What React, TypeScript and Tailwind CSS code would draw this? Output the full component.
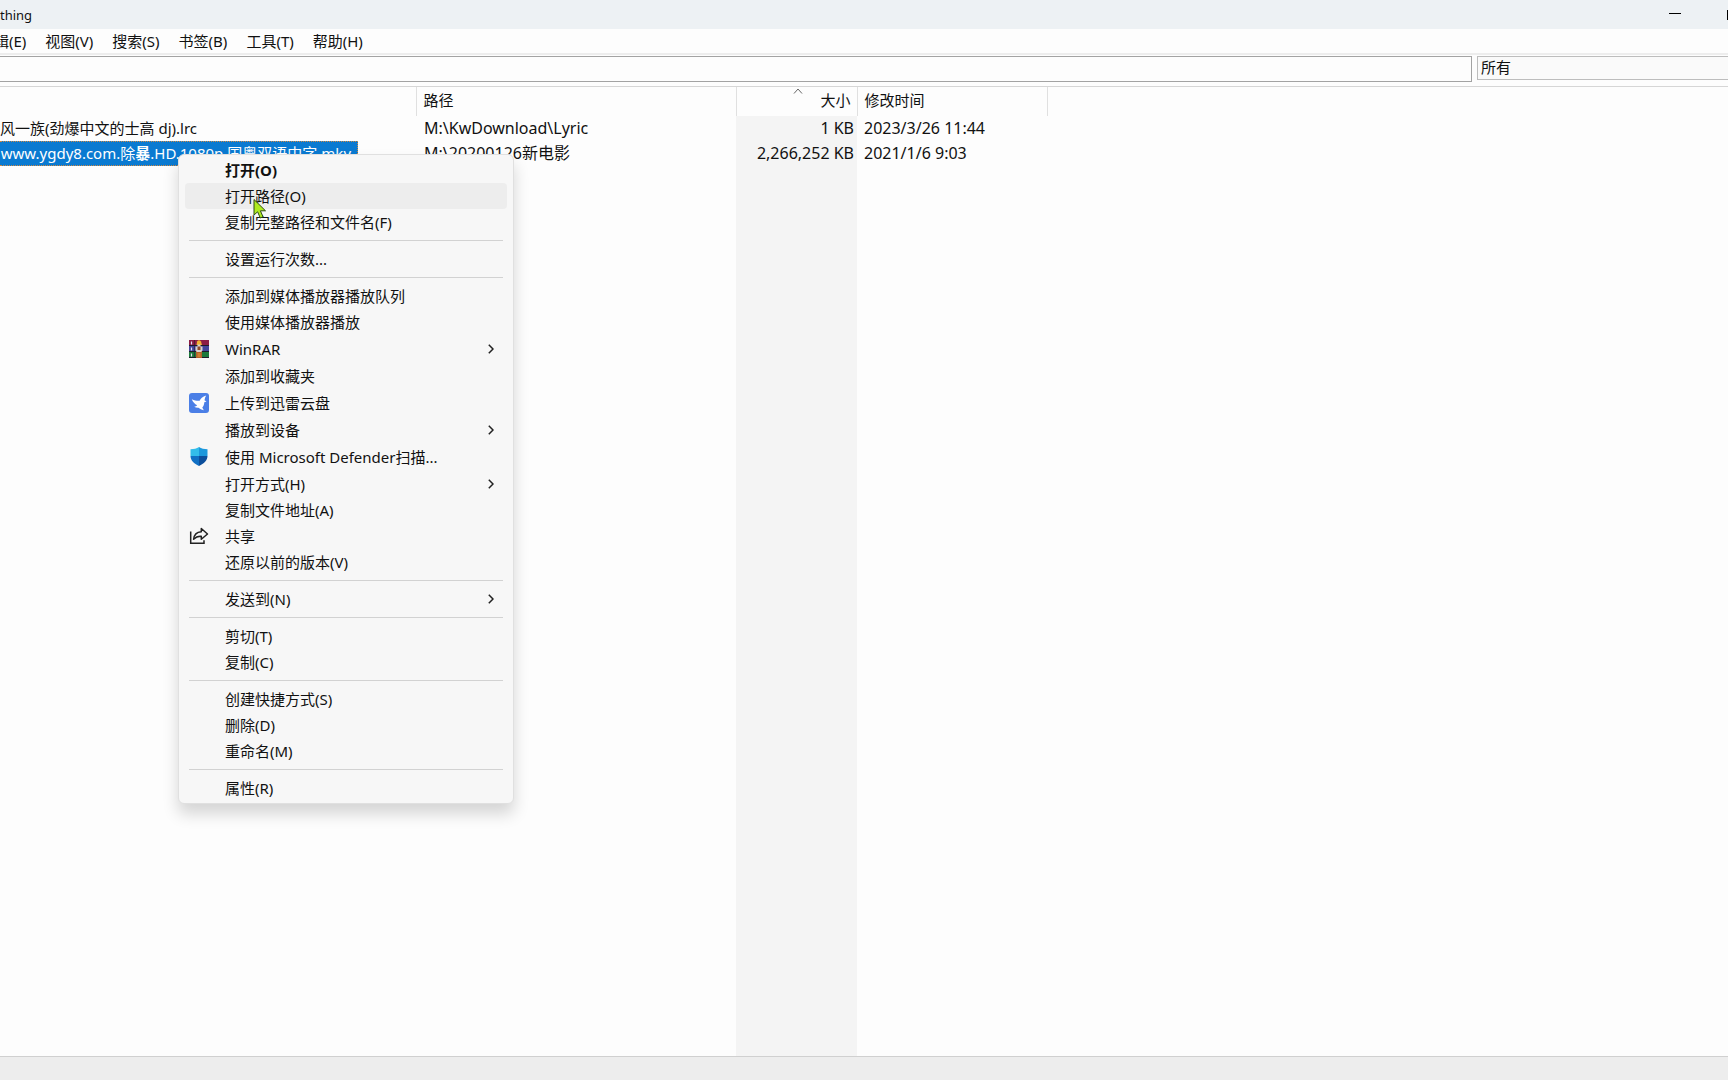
import React from "react";

type Item = {
  label: string;
  icon?: React.ReactNode;
  submenu?: boolean;
  bold?: boolean;
  active?: boolean;
  tall?: boolean;
};

function WinRarIcon() {
  return (
    <svg viewBox="0 0 20 18" className="h-[18px] w-5" aria-hidden="true">
      <rect x="0" y="0" width="20" height="6" fill="#8c1d45" />
      <rect x="0" y="6" width="20" height="6" fill="#43459c" />
      <rect x="0" y="12" width="20" height="6" fill="#1c7a3c" />
      <path d="M0 5.5h20M0 11.5h20M0 17.5h20" stroke="#1e1b2a" strokeWidth="1" />
      <path d="M2.500 1.500v3M2.500 7.500v3M2.500 13.500v3" stroke="#e8dff0" strokeWidth="1.200" />
      <path d="M5.500 0v5M5.500 6v5M5.500 12v5" stroke="#2b1830" strokeWidth="0.600" />
      <rect x="7" y="11" width="6" height="7" fill="#b4622c" />
      <path d="M8 1.500Q10 -1 12 1.500L13 5H7.500Z" fill="#f2b233" />
      <path d="M6.500 10.500V6.500H8.500V4.500H11.500V6.500H13.500V10.500L12 12H8Z" fill="#d9d3cf" />
      <path d="M8.500 6.500h3v3.500h-3z" fill="#8f4a2c" />
      <path d="M8.500 13h3v4h-3z" fill="#cf7f30" />
    </svg>
  );
}

function XunleiIcon() {
  return (
    <svg viewBox="0 0 20 20" className="size-5" aria-hidden="true">
      <rect width="20" height="20" rx="3" fill="#4b7fe6" />
      <path
        d="M2.800 6.200C5.500 7.500 8 8 10.600 7.800C11.500 5.800 13.500 3.800 17.200 2.600C16.200 4.200 15.700 5.600 15.500 7.200L17.500 8.600L15.300 9.200C15.200 11.500 14.500 13.200 13.300 14.400L14.800 17.300C12.500 16.800 10.800 16 9.600 14.800C7.800 14.900 6.400 14.500 5.200 13.700C6.600 13.500 7.500 13 8.200 12.300C5.800 11 3.800 9 2.800 6.200Z"
        fill="#fff"
      />
    </svg>
  );
}

function DefenderIcon() {
  const shield = "M9 0C11.300 1.500 14.200 2.200 17.500 2.300V9C17.500 13.500 14 16.600 9 19C4 16.600 0.500 13.500 0.500 9V2.300C3.800 2.200 6.700 1.500 9 0Z";
  return (
    <svg viewBox="0 0 18 19" className="h-[19px] w-[18px]" aria-hidden="true">
      <clipPath id="shield">
        <path d={shield} />
      </clipPath>
      <g clipPath="url(#shield)">
        <rect width="9" height="9" fill="#33bdea" />
        <rect x="9" width="9" height="9" fill="#1c98dc" />
        <rect y="9" width="9" height="10" fill="#1170c4" />
        <rect x="9" y="9" width="9" height="10" fill="#0c4f9c" />
      </g>
    </svg>
  );
}

function ShareIcon() {
  return (
    <svg viewBox="0 0 20 18" className="h-[18px] w-5" fill="none" stroke="#222" strokeWidth="1.500" aria-hidden="true">
      <path d="M1.700 4.500V16.300H15V13.200" />
      <path d="M12.300 1.500L18.500 7L12.300 12.300V9.200C9 9 6.800 9.800 4.600 12.300C5 8.200 7.800 5 12.300 4.700Z" strokeLinejoin="round" />
    </svg>
  );
}

function Chevron() {
  return (
    <svg viewBox="0 0 6 10" className="h-2.5 w-1.5" fill="none" stroke="#222" strokeWidth="1.500" aria-hidden="true">
      <path d="M0.800 0.800L5 5L0.800 9.200" />
    </svg>
  );
}

const groups: Item[][] = [
  [
    { label: "打开(O)", bold: true },
    { label: "打开路径(O)", active: true },
    { label: "复制完整路径和文件名(F)" },
  ],
  [{ label: "设置运行次数..." }],
  [
    { label: "添加到媒体播放器播放队列" },
    { label: "使用媒体播放器播放" },
    { label: "WinRAR", icon: <WinRarIcon />, submenu: true, tall: true },
    { label: "添加到收藏夹", tall: true },
    { label: "上传到迅雷云盘", icon: <XunleiIcon />, tall: true },
    { label: "播放到设备", submenu: true, tall: true },
    { label: "使用 Microsoft Defender扫描...", icon: <DefenderIcon />, tall: true },
    { label: "打开方式(H)", submenu: true, tall: true },
    { label: "复制文件地址(A)" },
    { label: "共享", icon: <ShareIcon /> },
    { label: "还原以前的版本(V)" },
  ],
  [{ label: "发送到(N)", submenu: true }],
  [{ label: "剪切(T)" }, { label: "复制(C)" }],
  [{ label: "创建快捷方式(S)" }, { label: "删除(D)" }, { label: "重命名(M)" }],
  [{ label: "属性(R)" }],
];

function MenuItem({ item }: { item: Item }) {
  return (
    <button
      type="button"
      role="menuitem"
      className={`mx-1.5 flex items-center rounded pr-[13px] text-left ${
        item.tall ? "h-[27px]" : "h-[26px]"
      } ${item.active ? "bg-[#ededed]" : ""} ${item.bold ? "font-bold" : ""}`}
    >
      <span className="flex w-10 shrink-0 items-center">
        <span className="ml-1 flex w-5 justify-center">{item.icon}</span>
      </span>
      <span className="grow whitespace-nowrap">{item.label}</span>
      {item.submenu && <Chevron />}
    </button>
  );
}

function ContextMenu() {
  return (
    <div
      role="menu"
      className="absolute top-[154px] left-[178px] flex w-[336px] flex-col rounded-md border border-[#e0e0e0] bg-[#f7f7f7] py-0.5 shadow-[0_10px_16px_rgba(0,0,0,0.16)]"
    >
      {groups.map((group, i) => (
        <div key={i} className="flex flex-col">
          {i > 0 && <hr className="mx-2.5 my-[5px] border-[#d2d2d2]" />}
          {group.map((item) => (
            <MenuItem key={item.label} item={item} />
          ))}
        </div>
      ))}
    </div>
  );
}

function Pointer() {
  return (
    <svg viewBox="0 0 14 22" className="absolute top-[198px] left-[253px] h-[22px] w-3.5" aria-hidden="true">
      <path
        d="M1 1.500V17L4.600 13.800L7.300 20L10 18.800L7.400 12.800H12.500Z"
        fill="#aeea20"
        stroke="#2d4a12"
        strokeWidth="1"
        strokeLinejoin="round"
      />
    </svg>
  );
}

const menus = ["辑(E)", "视图(V)", "搜索(S)", "书签(B)", "工具(T)", "帮助(H)"];

export default function App() {
  return (
    <div className="relative flex min-h-screen flex-col overflow-hidden bg-[#fdfdfd] font-['Noto_Sans','Noto_Sans_CJK_SC',sans-serif] text-[15px] leading-5 text-[#111]">
      <header className="flex h-[29px] items-center justify-between bg-[#edf1f4]">
        <h1 className="text-[13px]">thing</h1>
        <div className="flex items-center">
          <button type="button" aria-label="最小化" className="flex h-[29px] w-[46px] items-center justify-center pb-0.5">
            <span className="h-px w-3 bg-black" />
          </button>
          <button type="button" aria-label="最大化" className="ml-[29px] h-2.5 w-px bg-black" />
        </div>
      </header>

      <nav className="-ml-1.5 flex h-6 items-center gap-[19px]">
        {menus.map((m) => (
          <button key={m} type="button" className="whitespace-nowrap">
            {m}
          </button>
        ))}
      </nav>

      <div className="flex h-[34px] items-start gap-[5px] border-t-2 border-b border-t-[#ededed] border-b-[#d6d6d6] pt-px">
        <input
          type="text"
          aria-label="搜索"
          className="h-[26px] min-w-0 grow border border-l-0 border-[#a3a3a3] bg-[#fdfdfd] px-1 outline-none"
        />
        <select
          aria-label="筛选"
          className="h-6 w-[251px] shrink-0 appearance-none border border-r-0 border-[#bdbdbd] bg-[#fafafa] pb-0.5 pl-[3px] leading-5 outline-none"
        >
          <option>所有</option>
        </select>
      </div>

      <main className="flex grow flex-col">
        <table className="w-full grow table-fixed border-collapse text-left">
          <colgroup>
            <col className="w-[416px]" />
            <col className="w-80" />
            <col className="w-[121px]" />
            <col className="w-[190px]" />
            <col />
          </colgroup>
          <thead>
            <tr className="h-[29px]">
              <th aria-label="名称" className="border-r border-[#e0e0e0]" />
              <th className="border-r border-[#e0e0e0] pb-1 pl-[7px] font-normal">路径</th>
              <th className="relative border-r border-[#e0e0e0] pr-1.5 pb-1 text-right font-normal">
                <svg viewBox="0 0 10 6" className="absolute top-px left-14 h-1.5 w-2.5" fill="none" stroke="#666" aria-hidden="true">
                  <path d="M1 5.500L5 1L9 5.500" />
                </svg>
                大小
              </th>
              <th className="border-r border-[#e0e0e0] pb-1 pl-[7px] font-normal">修改时间</th>
              <th />
            </tr>
          </thead>
          <tbody>
            <tr className="h-[25px] text-base leading-5">
              <td className="pb-0.5 text-[15px] leading-5 whitespace-nowrap">风一族(劲爆中文的士高 dj).lrc</td>
              <td className="pb-0.5 pl-2">M:\KwDownload\Lyric</td>
              <td className="bg-[#f4f4f4] pr-[3px] pb-0.5 text-right">1 KB</td>
              <td className="pb-0.5 pl-[7px]">2023/3/26 11:44</td>
              <td />
            </tr>
            <tr className="h-[25px] text-base leading-5">
              <td>
                <div className="flex h-[25px] w-[358px] items-center justify-end overflow-hidden border border-l-0 border-dotted border-[#d08a45] bg-[#0a7ad1] pr-1.5 pb-0.5 text-[15px] leading-5 text-white">
                  <span className="whitespace-nowrap">
                    www.ygdy8.com.除<b>暴</b>.HD.1080p.国粤双语中字.mkv
                  </span>
                </div>
              </td>
              <td className="pb-0.5 pl-2">M:\20200126新电影</td>
              <td className="bg-[#f4f4f4] pr-[3px] pb-0.5 text-right">2,266,252 KB</td>
              <td className="pb-0.5 pl-[7px]">2021/1/6 9:03</td>
              <td />
            </tr>
            <tr>
              <td />
              <td />
              <td className="bg-[#f4f4f4]" />
              <td />
              <td />
            </tr>
          </tbody>
        </table>
      </main>

      <footer className="h-6 border-t border-[#d0d0d0] bg-[#ededed]" />

      <ContextMenu />
      <Pointer />
    </div>
  );
}
